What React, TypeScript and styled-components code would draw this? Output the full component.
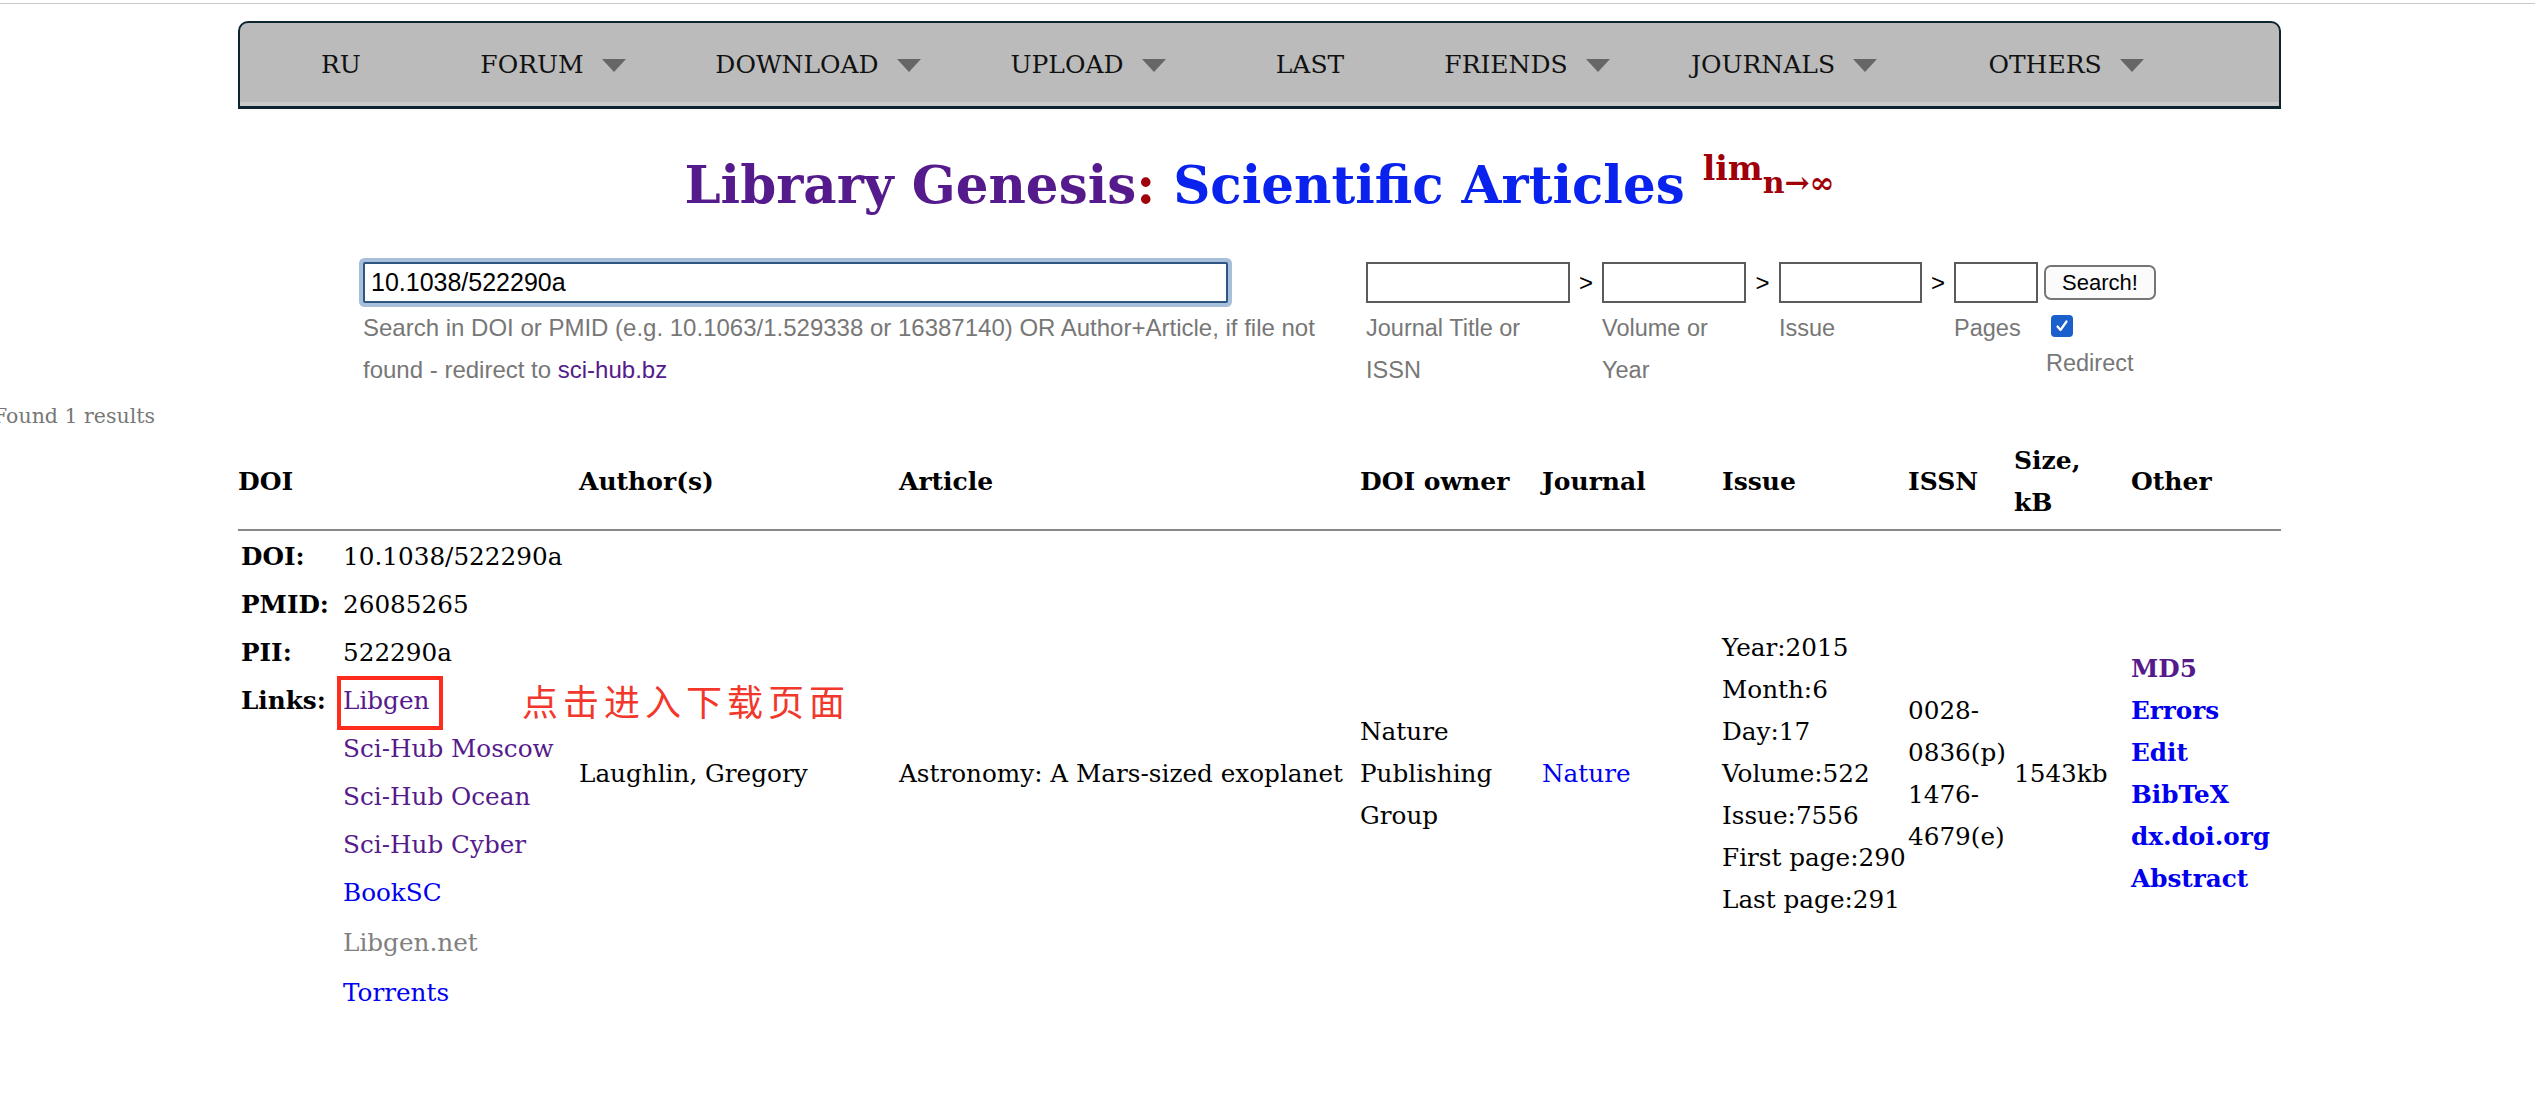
import React from "react";
import styled, { createGlobalStyle } from "styled-components";

const GlobalStyle = createGlobalStyle`
  html, body { margin: 0; padding: 0; background: #fff; }
  body { font-family: "DejaVu Serif", serif; color: #000; }
  a { text-decoration: none; }
`;

const TopRule = styled.div`
  margin-top: 3px;
  height: 1px;
  background: #c9c9c9;
`;

const Shell = styled.div`
  padding-left: 238px;
  width: 2043px;
`;

const Nav = styled.nav`
  box-sizing: border-box;
  margin-top: 17px;
  height: 88px;
  border: 2px solid #0d2431;
  border-bottom-width: 3px;
  border-radius: 10px 10px 0 0;
  background: #bbbbbb;
  box-shadow: inset 0 -4px 0 #cacaca;
  display: grid;
  grid-template-columns: 202px 222px 308px 232px 212px 222px 292px 272px;
  align-items: center;
`;

const NavItem = styled.a`
  display: flex;
  justify-content: center;
  align-items: center;
  gap: 18px;
  font-size: 25px;
  color: #111;
`;

const Caret = styled.span`
  width: 0;
  height: 0;
  border-left: 12px solid transparent;
  border-right: 12px solid transparent;
  border-top: 13px solid #666;
  margin-top: 2px;
`;

const Title = styled.h1`
  margin: 45px 0 0;
  font-size: 51.5px;
  line-height: 62px;
  font-weight: bold;
  text-align: center;
`;

const TitleWord = styled.span<{ $c: string }>`
  color: ${(p) => p.$c};
`;

const Lim = styled.span`
  position: relative;
  top: -23px;
  font-size: 33px;
  color: #a00008;
`;

const LimSub = styled.span`
  position: relative;
  top: 13px;
  font-size: 30px;
`;

const SearchRow = styled.div`
  margin-top: 38px;
  display: flex;
  justify-content: center;
  gap: 25px;
  font-family: "Liberation Sans", Arial, sans-serif;
`;

const MainSearch = styled.div`
  width: 978px;
`;

const MainInput = styled.input`
  box-sizing: border-box;
  width: 865px;
  height: 41px;
  border: 2px solid #2f5583;
  border-radius: 2px;
  box-shadow: 0 0 0 4px #a7bfdb;
  padding: 0 6px;
  font: 25px "Liberation Sans", Arial, sans-serif;
  color: #000;
  outline: none;
`;

const Hint = styled.div`
  margin-top: 4px;
  font-size: 24px;
  line-height: 42px;
  color: #777;
`;

const HintLink = styled.a`
  color: #551a8b;
`;

const FieldGrid = styled.div`
  display: grid;
  grid-template-columns: 204px 32px 144px 33px 143px 32px 84px 118px;
  align-items: center;
`;

const Field = styled.input`
  box-sizing: border-box;
  width: 100%;
  height: 41px;
  border: 2px solid #5b5b5b;
  background: #fff;
  outline: none;
`;

const Sep = styled.span`
  text-align: center;
  font-size: 24px;
  color: #000;
`;

const SearchButton = styled.button`
  box-sizing: border-box;
  margin-left: 6px;
  width: 112px;
  height: 35px;
  border: 2px solid #767676;
  border-radius: 7px;
  background: #fbfbfb;
  font: 22px "Liberation Sans", Arial, sans-serif;
  color: #000;
  padding: 0;
`;

const Label = styled.div`
  align-self: start;
  margin-top: 4px;
  font-size: 23.5px;
  line-height: 42px;
  color: #777;
`;

const RedirectCell = styled.div`
  align-self: start;
  display: flex;
  flex-direction: column;
  padding-top: 12px;
`;

const CheckBox = styled.span`
  box-sizing: border-box;
  margin-left: 13px;
  width: 22px;
  height: 22px;
  border-radius: 4px;
  background: #1b5fcc;
  display: flex;
  align-items: center;
  justify-content: center;
`;

const RedirectLabel = styled.span`
  margin-left: 8px;
  margin-top: 5px;
  font-size: 23.5px;
  line-height: 42px;
  color: #777;
`;

const Found = styled.div`
  margin: 11px 0 0 -7px;
  font-size: 20.5px;
  line-height: 28px;
  color: #777;
`;

const Table = styled.div`
  margin-top: 10px;
  display: grid;
  grid-template-columns: 341px 320px 461px 182px 180px 186px 106px 117px 150px;
`;

const Head = styled.div`
  align-self: center;
  font-weight: bold;
  font-size: 25px;
  line-height: 42px;
`;

const HeadRule = styled.div`
  grid-column: 1 / -1;
  height: 2px;
  margin-top: 5px;
  background: #888;
`;

const Cell = styled.div<{ $nowrap?: boolean }>`
  align-self: center;
  font-size: 24.7px;
  line-height: 42px;
  white-space: ${(p) => (p.$nowrap ? "nowrap" : "normal")};
`;

const IdBlock = styled.div`
  margin-top: 2px;
  display: grid;
  grid-template-columns: 105px auto;
  font-size: 24.7px;
  line-height: 48px;
`;

const IdLabel = styled.div`
  padding-left: 3px;
  font-weight: bold;
`;

const LinkList = styled.div`
  display: flex;
  flex-direction: column;
  align-items: flex-start;
`;

const TextLink = styled.a<{ $c: string; $bold?: boolean; $extra?: number }>`
  position: relative;
  color: ${(p) => p.$c};
  font-weight: ${(p) => (p.$bold ? "bold" : "normal")};
  margin-top: ${(p) => p.$extra ?? 0}px;
`;

const Highlight = styled.span`
  position: absolute;
  left: -6px;
  top: -1px;
  width: 106px;
  height: 54px;
  box-sizing: border-box;
  border: 4px solid #ff2b1c;
`;

const Note = styled.span`
  position: absolute;
  left: 179px;
  top: 2px;
  white-space: nowrap;
  font-family: "Noto Sans CJK SC", sans-serif;
  font-size: 36px;
  line-height: 42px;
  letter-spacing: 5px;
  color: #f2382c;
`;

const Lines = styled.div`
  display: flex;
  flex-direction: column;
  align-items: flex-start;
`;

const PURPLE = "#551a8b";
const BLUE = "#0000ee";
const GRAY = "#808080";

const navItems: [string, boolean][] = [
  ["RU", false],
  ["FORUM", true],
  ["DOWNLOAD", true],
  ["UPLOAD", true],
  ["LAST", false],
  ["FRIENDS", true],
  ["JOURNALS", true],
  ["OTHERS", true],
];

const links: [string, string, number][] = [
  ["Sci-Hub Moscow", PURPLE, 0],
  ["Sci-Hub Ocean", PURPLE, 0],
  ["Sci-Hub Cyber", PURPLE, 0],
  ["BookSC", BLUE, 0],
  ["Libgen.net", GRAY, 2],
  ["Torrents", BLUE, 2],
];

const issue = ["Year:2015", "Month:6", "Day:17", "Volume:522", "Issue:7556", "First page:290", "Last page:291"];
const issn = ["0028-", "0836(p)", "1476-", "4679(e)"];
const other: [string, string][] = [
  ["MD5", PURPLE],
  ["Errors", BLUE],
  ["Edit", BLUE],
  ["BibTeX", BLUE],
  ["dx.doi.org", BLUE],
  ["Abstract", BLUE],
];

export default function App() {
  return (
    <>
      <GlobalStyle />
      <TopRule />
      <Shell>
        <Nav>
          {navItems.map(([t, arrow]) => (
            <NavItem key={t}>
              {t}
              {arrow && <Caret />}
            </NavItem>
          ))}
        </Nav>
        <Title>
          <TitleWord $c={PURPLE}>Library Genesis</TitleWord>
          <TitleWord $c="#a00008">:</TitleWord>{" "}
          <TitleWord $c="#0a22ee">Scientific Articles</TitleWord>{" "}
          <Lim>
            lim<LimSub>n→∞</LimSub>
          </Lim>
        </Title>
        <SearchRow>
          <MainSearch>
            <MainInput defaultValue="10.1038/522290a" />
            <Hint>
              Search in DOI or PMID (e.g. 10.1063/1.529338 or 16387140) OR Author+Article, if file not found - redirect
              to <HintLink>sci-hub.bz</HintLink>
            </Hint>
          </MainSearch>
          <FieldGrid>
            <Field />
            <Sep>&gt;</Sep>
            <Field />
            <Sep>&gt;</Sep>
            <Field />
            <Sep>&gt;</Sep>
            <Field />
            <SearchButton>Search!</SearchButton>
            <Label>Journal Title or ISSN</Label>
            <span />
            <Label>Volume or Year</Label>
            <span />
            <Label>Issue</Label>
            <span />
            <Label>Pages</Label>
            <RedirectCell>
              <CheckBox>
                <svg width="14" height="14" viewBox="0 0 14 14">
                  <path d="M2.5 7.5 L5.5 11 L11.5 2.5" fill="none" stroke="#fff" strokeWidth="2.2" strokeLinecap="round" strokeLinejoin="round" />
                </svg>
              </CheckBox>
              <RedirectLabel>Redirect</RedirectLabel>
            </RedirectCell>
          </FieldGrid>
        </SearchRow>
      </Shell>
      <Found>Found 1 results</Found>
      <Shell>
        <Table>
          <Head>DOI</Head>
          <Head>Author(s)</Head>
          <Head>Article</Head>
          <Head>DOI owner</Head>
          <Head>Journal</Head>
          <Head>Issue</Head>
          <Head>ISSN</Head>
          <Head>
            Size,
            <br />
            kB
          </Head>
          <Head>Other</Head>
          <HeadRule />
          <IdBlock>
            <IdLabel>DOI:</IdLabel>
            <div>10.1038/522290a</div>
            <IdLabel>PMID:</IdLabel>
            <div>26085265</div>
            <IdLabel>PII:</IdLabel>
            <div>522290a</div>
            <IdLabel>Links:</IdLabel>
            <LinkList>
              <TextLink $c={PURPLE}>
                Libgen
                <Highlight />
                <Note>点击进入下载页面</Note>
              </TextLink>
              {links.map(([t, c, extra]) => (
                <TextLink key={t} $c={c} $extra={extra}>
                  {t}
                </TextLink>
              ))}
            </LinkList>
          </IdBlock>
          <Cell>Laughlin, Gregory</Cell>
          <Cell $nowrap>Astronomy: A Mars-sized exoplanet</Cell>
          <Cell>Nature Publishing Group</Cell>
          <Cell>
            <TextLink $c={BLUE}>Nature</TextLink>
          </Cell>
          <Cell>
            <Lines>
              {issue.map((l) => (
                <span key={l}>{l}</span>
              ))}
            </Lines>
          </Cell>
          <Cell>
            <Lines>
              {issn.map((l) => (
                <span key={l}>{l}</span>
              ))}
            </Lines>
          </Cell>
          <Cell>1543kb</Cell>
          <Cell>
            <Lines>
              {other.map(([t, c]) => (
                <TextLink key={t} $c={c} $bold>
                  {t}
                </TextLink>
              ))}
            </Lines>
          </Cell>
        </Table>
      </Shell>
    </>
  );
}
